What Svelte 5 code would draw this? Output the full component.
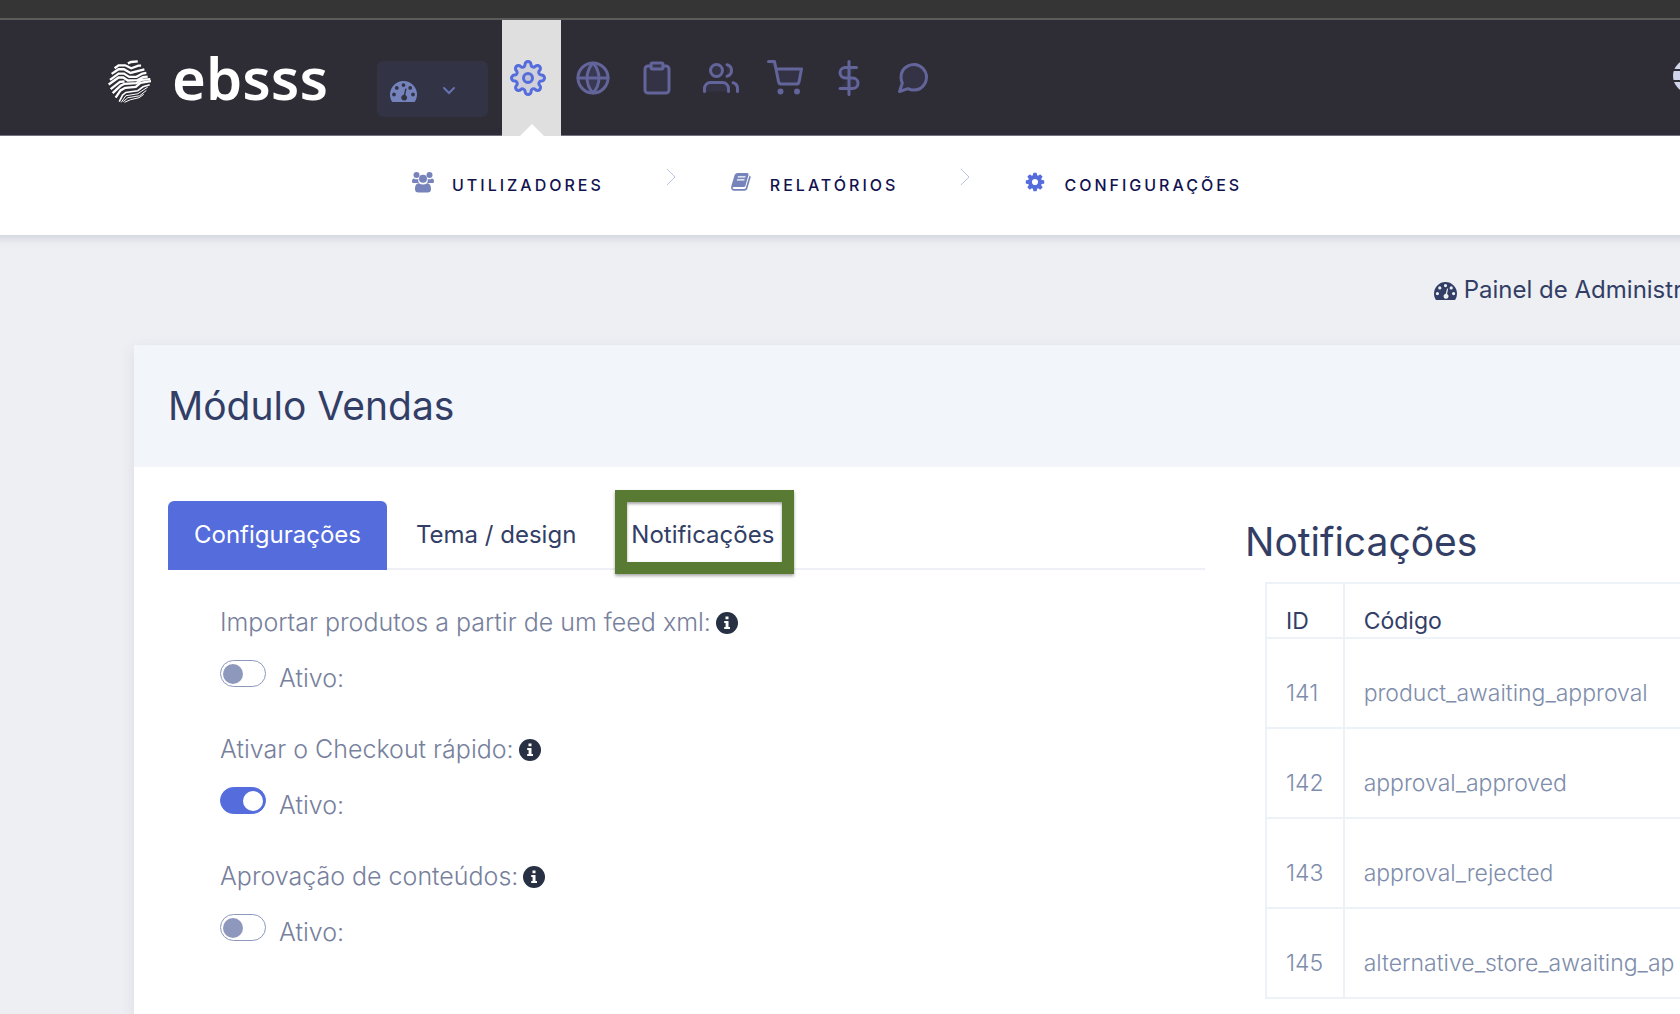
<script lang="ts">
	let activeTab = 'Configurações';
	const tabs = ['Configurações', 'Tema / design', 'Notificações'];

	let settings = [
		{ id: 'feed', label: 'Importar produtos a partir de um feed xml:', on: false },
		{ id: 'checkout', label: 'Ativar o Checkout rápido:', on: true },
		{ id: 'approval', label: 'Aprovação de conteúdos:', on: false }
	];

	const notifications = [
		{ id: 141, code: 'product_awaiting_approval' },
		{ id: 142, code: 'approval_approved' },
		{ id: 143, code: 'approval_rejected' },
		{ id: 145, code: 'alternative_store_awaiting_ap' }
	];

	// 24x24 line icons of the top bar
	const menu = [
		{
			name: 'Definições',
			active: true,
			paths: [
				'M15 12a3 3 0 1 1-6 0 3 3 0 0 1 6 0z',
				'M19.4 15a1.65 1.65 0 0 0 .33 1.82l.06.06a2 2 0 0 1 0 2.83 2 2 0 0 1-2.83 0l-.06-.06a1.65 1.65 0 0 0-1.82-.33 1.65 1.65 0 0 0-1 1.51V21a2 2 0 0 1-2 2 2 2 0 0 1-2-2v-.09A1.65 1.65 0 0 0 9 19.4a1.65 1.65 0 0 0-1.82.33l-.06.06a2 2 0 0 1-2.83 0 2 2 0 0 1 0-2.83l.06-.06a1.65 1.65 0 0 0 .33-1.82 1.65 1.65 0 0 0-1.51-1H3a2 2 0 0 1-2-2 2 2 0 0 1 2-2h.09A1.65 1.65 0 0 0 4.6 9a1.65 1.65 0 0 0-.33-1.82l-.06-.06a2 2 0 0 1 0-2.83 2 2 0 0 1 2.83 0l.06.06a1.65 1.65 0 0 0 1.82.33H9a1.65 1.65 0 0 0 1-1.51V3a2 2 0 0 1 2-2 2 2 0 0 1 2 2v.09a1.65 1.65 0 0 0 1 1.51 1.65 1.65 0 0 0 1.82-.33l.06-.06a2 2 0 0 1 2.83 0 2 2 0 0 1 0 2.83l-.06.06a1.65 1.65 0 0 0-.33 1.82V9a1.65 1.65 0 0 0 1.51 1H21a2 2 0 0 1 2 2 2 2 0 0 1-2 2h-.09a1.65 1.65 0 0 0-1.51 1z'
			]
		},
		{
			name: 'Website',
			paths: [
				'M22 12a10 10 0 1 1-20 0 10 10 0 0 1 20 0z',
				'M2 12h20',
				'M12 2a15.3 15.3 0 0 1 4 10 15.3 15.3 0 0 1-4 10 15.3 15.3 0 0 1-4-10 15.3 15.3 0 0 1 4-10z'
			]
		},
		{
			name: 'Conteúdos',
			paths: [
				'M16 4h2a2 2 0 0 1 2 2v14a2 2 0 0 1-2 2H6a2 2 0 0 1-2-2V6a2 2 0 0 1 2-2h2',
				'M9 2h6a1 1 0 0 1 1 1v2a1 1 0 0 1-1 1H9a1 1 0 0 1-1-1V3a1 1 0 0 1 1-1z'
			]
		},
		{
			name: 'Clientes',
			paths: [
				'M17 21v-2a4 4 0 0 0-4-4H5a4 4 0 0 0-4 4v2',
				'M13 7a4 4 0 1 1-8 0 4 4 0 0 1 8 0z',
				'M23 21v-2a4 4 0 0 0-3-3.87',
				'M16 3.13a4 4 0 0 1 0 7.75'
			]
		},
		{
			name: 'Vendas',
			paths: [
				'M10 21a1 1 0 1 1-2 0 1 1 0 0 1 2 0z',
				'M21 21a1 1 0 1 1-2 0 1 1 0 0 1 2 0z',
				'M1 1h4l2.68 13.39a2 2 0 0 0 2 1.61h9.72a2 2 0 0 0 2-1.61L23 6H6'
			]
		},
		{
			name: 'Pagamentos',
			paths: ['M12 1v22', 'M17 5H9.5a3.5 3.5 0 0 0 0 7h5a3.5 3.5 0 0 1 0 7H6']
		},
		{
			name: 'Mensagens',
			paths: [
				'M21 11.5a8.38 8.38 0 0 1-.9 3.8 8.5 8.5 0 0 1-7.6 4.7 8.38 8.38 0 0 1-3.8-.9L3 21l1.9-5.7a8.38 8.38 0 0 1-.9-3.8 8.5 8.5 0 0 1 4.7-7.6 8.38 8.38 0 0 1 3.8-.9h.5a8.48 8.48 0 0 1 8 8v.5z'
			]
		}
	];
</script>

{#snippet gauge()}
	<svg class="gauge" viewBox="0 0 27 21" aria-hidden="true">
		<path
			fill="currentColor"
			fill-rule="evenodd"
			d="M13.5 0A13.5 13.5 0 0 0 0 13.5c0 2.6.7 5 1.9 7 .2.3.5.5.9.5h21.4c.4 0 .7-.2.9-.5a13.5 13.5 0 0 0 1.9-7A13.5 13.5 0 0 0 13.5 0zM13.5 2.2a1.9 1.9 0 1 1 0 3.8 1.9 1.9 0 0 1 0-3.8zM6.8 5a1.9 1.9 0 1 1 0 3.8 1.9 1.9 0 0 1 0-3.8zM20.2 5a1.9 1.9 0 1 1 0 3.8 1.9 1.9 0 0 1 0-3.8zM4 11.6a1.9 1.9 0 1 1 0 3.8 1.9 1.9 0 0 1 0-3.8zM23 11.6a1.9 1.9 0 1 1 0 3.8 1.9 1.9 0 0 1 0-3.8zM15.3 7.5l1.3.3-1.3 6.2a2.9 2.9 0 1 1-1.5-.2z"
		/>
	</svg>
{/snippet}

{#snippet separator()}
	<svg class="separator" viewBox="0 0 10 18" aria-hidden="true">
		<path d="M1 1l8 8-8 8" fill="none" stroke="currentColor" />
	</svg>
{/snippet}

<div class="page">
	<div class="strip"></div>

	<header class="topbar">
		<a class="logo" href="#home">
			<svg class="logo-mark" viewBox="52 180 130 130" aria-hidden="true">
				<g fill="none" stroke="#fff" stroke-width="7">
					<path d="M112 190l10-4 20-2" />
					<path d="M72 205l12-9h20l18 9 22-8h8" />
					<path d="M63 222l21-14h16l20 11 42-11" />
					<path d="M58 240l26-19h16l16 10h22l18-10 12-2" />
					<path d="M54 254l30-21h14l14 9 28-1 18-9 14-2" />
					<path d="M60 268l28-22 14-1" />
					<path d="M66 280l24-22 12-6 36-2 14-10 28-2" />
					<path d="M75 294l15-22 14-8 32-3 14-12 32-5" />
					<path d="M86 306l10-20 10-8 36-5 16-12 20-6" stroke-width="5" />
					<path d="M92 308l14-20 36-6 30-20" stroke-width="3" />
					<path d="M98 306l14-12 36-6 20-16" stroke-width="3" />
					<path d="M102 308l18-8 26-6 14-10" stroke-width="3" />
				</g>
			</svg>
			<span>ebsss</span>
		</a>

		<button class="switcher" aria-label="Painel">
			{@render gauge()}
			<svg class="caret" viewBox="0 0 14 10" aria-hidden="true">
				<path d="M2 2l5 5 5-5" fill="none" stroke="currentColor" stroke-width="2" stroke-linecap="round" />
			</svg>
		</button>

		<nav class="menu">
			{#each menu as item}
				<a href="#menu" class:active={item.active} aria-label={item.name}>
					<svg viewBox="0 0 24 24" aria-hidden="true">
						{#each item.paths as d}
							<path {d} />
						{/each}
					</svg>
				</a>
			{/each}
		</nav>

		<a class="language" href="#language" aria-label="Idioma">
			<svg viewBox="0 0 34 34" aria-hidden="true">
				<circle cx="17" cy="17" r="17" fill="#d1d5eb" />
				<path d="M0 11h34M0 22h34" stroke="#2e2c35" stroke-width="2" />
				<ellipse cx="17" cy="17" rx="7" ry="17" fill="none" stroke="#2e2c35" stroke-width="2" />
			</svg>
		</a>
	</header>

	<nav class="subnav">
		<a href="#users">
			<svg viewBox="0 0 22 22" fill="currentColor" aria-hidden="true">
				<circle cx="4.5" cy="4" r="3" />
				<circle cx="17.5" cy="4" r="3" />
				<path d="M0 10.5C0 8.5.8 7.5 2 7.5c1.5 1 3 1 4.5.5C6 9.5 6.3 11 7 12H1.8C.6 12 0 11.5 0 10.5zM22 10.5c0-2-.8-3-2-3-1.5 1-3 1-4.5.5.5 1.5.2 3-.5 4h5.2c1.2 0 1.8-.5 1.8-1.5z" />
				<circle cx="11" cy="7.8" r="4" />
				<path d="M7 12.2c2.5 1.8 5.5 1.8 8 0 2.8 0 4 2.5 4 6 0 2-1.2 3.3-3.2 3.3H6.2C4.2 21.5 3 20.2 3 18.2c0-3.5 1.2-6 4-6z" />
			</svg>
			UTILIZADORES
		</a>
		{@render separator()}
		<a href="#reports">
			<svg viewBox="0 0 22 22" fill="currentColor" aria-hidden="true">
				<path
					fill-rule="evenodd"
					d="M7.5 2H17c1.2 0 1.8.8 1.5 2l-3 10.5c-.3 1-1 1.5-2 1.5H4c-1 0-1.5.5-1.3 1.2.2.6.8.8 1.5.8h10c.8 0 1.3-.4 1.6-1.2L19 6l.8-1.5c.8.5 1 1.2.8 2l-3.2 11c-.4 1.3-1.4 2.2-2.8 2.2H4.2C2 19.7.6 18 1.2 15.5l3.3-11C4.9 3 6 2 7.5 2zM8 5.2l-.4 1.2h7.6l.4-1.2zM7.1 8.200l-.4 1.200h7.600l.4-1.200z"
				/>
			</svg>
			RELATÓRIOS
		</a>
		{@render separator()}
		<a href="#settings" class="current">
			<svg viewBox="-150 -278 1836 1836" fill="currentColor" aria-hidden="true">
				<path
					d="M1024 640q0-106-75-181t-181-75-181 75-75 181 75 181 181 75 181-75 75-181zm512-109v222q0 12-8 23t-20 13l-185 28q-19 54-39 91 35 50 107 138 10 12 10 25t-9 23q-27 37-99 108t-94 71q-12 0-26-9l-138-108q-44 23-91 38-16 136-29 186-7 28-36 28h-222q-14 0-24.5-8.5t-11.5-21.5l-28-184q-49-16-90-37l-141 107q-10 9-25 9-14 0-25-11-126-114-165-168-7-10-7-23 0-12 8-23 15-21 51-66.5t54-70.5q-27-50-41-99l-183-27q-13-2-21-12.5t-8-23.5v-222q0-12 8-23t19-13l186-28q14-46 39-92-40-57-107-138-10-12-10-24 0-10 9-23 26-36 98.5-107.5t94.5-71.5q13 0 26 10l138 107q44-23 91-38 16-136 29-186 7-28 36-28h222q14 0 24.5 8.5t11.5 21.5l28 184q49 16 90 37l142-107q9-9 24-9 13 0 25 10 129 119 165 170 7 8 7 22 0 12-8 23-15 21-51 66.5t-54 70.5q26 50 41 98l183 28q13 2 21 12.5t8 23.5z"
				/>
			</svg>
			CONFIGURAÇÕES
		</a>
	</nav>

	<div class="breadcrumb">
		<a href="#dashboard">{@render gauge()} Painel de Administr</a>
	</div>

	<main class="card">
		<div class="card-head">
			<h1>Módulo Vendas</h1>
		</div>

		<div class="card-body">
			<section>
				<div class="tabs" role="tablist">
					{#each tabs as tab}
						<button
							role="tab"
							aria-selected={activeTab === tab}
							class:active={activeTab === tab}
							on:click={() => (activeTab = tab)}
						>
							{tab}
							{#if tab === 'Notificações'}<span class="marker"></span>{/if}
						</button>
					{/each}
				</div>

				<div class="settings">
					{#each settings as setting}
						<div class="setting">
							<p>
								{setting.label}
								<svg class="info" viewBox="0 0 22 22" aria-hidden="true">
									<circle cx="11" cy="11" r="11" fill="#283143" />
									<path fill="#fff" d="M9.5 4.5h3v2.8h-3zM8.2 9h4.3v6H14v2H8.200v-2h1.400v-4H8.200z" />
								</svg>
							</p>
							<div class="switch">
								<input id={setting.id} type="checkbox" bind:checked={setting.on} />
								<label for={setting.id}>Ativo:</label>
							</div>
						</div>
					{/each}
				</div>
			</section>

			<section class="notifications">
				<h2>Notificações</h2>
				<table>
					<thead>
						<tr>
							<th>ID</th>
							<th>Código</th>
						</tr>
					</thead>
					<tbody>
						{#each notifications as row}
							<tr>
								<td>{row.id}</td>
								<td>{row.code}</td>
							</tr>
						{/each}
					</tbody>
				</table>
			</section>
		</div>
	</main>
</div>

<style>
	:global(body) {
		margin: 0;
		background: #eeeff3;
	}

	.page {
		display: flex;
		flex-direction: column;
		min-height: 100vh;
		overflow: hidden;
		box-sizing: border-box;
		font-family: Inter, 'Open Sans', sans-serif;
		font-size: 24px;
		color: #323e66;
	}

	a {
		color: inherit;
		text-decoration: none;
	}

	button {
		font: inherit;
		color: inherit;
		border: none;
		background: none;
		cursor: pointer;
	}

	.strip {
		height: 18px;
		background: #353535;
		border-bottom: 2px solid #5c5c5b;
	}

	.topbar {
		display: flex;
		height: 115px;
		padding-left: 108px;
		background: #2e2c35;
		border-bottom: 1px solid #77767e;
	}

	.logo {
		display: flex;
		align-items: center;
		gap: 21px;
		width: 269px;
		color: #fff;
		font-family: 'Noto Sans', sans-serif;
		font-size: 58px;
		font-weight: 600;
		line-height: 110px;
	}

	.logo-mark {
		width: 43px;
		height: 43px;
		margin-top: 8px;
	}

	.switcher {
		display: flex;
		align-items: center;
		gap: 25px;
		width: 111px;
		height: 56px;
		margin: 41px 14px 0 0;
		padding: 4px 13px 0;
		border-radius: 6px;
		background: #323344;
		color: #7583bd;
	}

	.gauge {
		width: 27px;
		height: 21px;
	}

	.caret {
		width: 14px;
		height: 10px;
		color: #6573b5;
	}

	.menu {
		display: flex;
		flex: 1;
		gap: 28px;
	}

	.menu a {
		position: relative;
		height: 116px;
		padding-top: 40px;
		box-sizing: border-box;
		color: #62649a;
	}

	.menu svg {
		width: 36px;
		height: 36px;
		fill: rgba(100, 110, 190, 0.12);
		stroke: currentColor;
		stroke-width: 2;
		stroke-linecap: round;
		stroke-linejoin: round;
	}

	.menu .active {
		padding: 40px 15px 0 8px;
		margin-right: -14px;
		background: #dfdfdf;
		color: #556ddc;
	}

	.menu .active::after {
		content: '';
		position: absolute;
		bottom: 0;
		left: 18px;
		border: 12px solid transparent;
		border-top: none;
		border-bottom-color: #fff;
	}

	.language {
		margin: 39px -27px 0 0;
	}

	.language svg {
		width: 34px;
		height: 34px;
	}

	/* the bar runs past both window edges so its shadow stays even */
	.subnav {
		display: flex;
		align-items: center;
		gap: 54px;
		height: 99px;
		margin: 0 -20px;
		padding-left: 432px;
		background: #fff;
		box-shadow: 0 2px 10px rgba(60, 70, 120, 0.2);
		color: #12124f;
		font-size: 16px;
		font-weight: 500;
		letter-spacing: 3px;
	}

	.subnav a {
		display: flex;
		align-items: center;
		gap: 18px;
		margin-bottom: 2px;
	}

	.subnav a svg {
		width: 22px;
		height: 22px;
		margin-bottom: 6px;
		color: #7784bb;
	}

	.subnav .current svg {
		color: #556ddc;
	}

	.separator {
		width: 10px;
		height: 18px;
		margin: 0 0 18px 8px;
		color: #b9c3e4;
	}

	.breadcrumb {
		display: flex;
		justify-content: flex-end;
		height: 110px;
		line-height: 110px;
		white-space: nowrap;
	}

	.breadcrumb a {
		width: 246px;
	}

	.breadcrumb .gauge {
		width: 23px;
		height: 18px;
		vertical-align: -2px;
	}

	.card {
		flex: 1;
		margin: 0 -20px 0 134px;
		background: #fff;
		box-shadow: 0 4px 14px rgba(60, 70, 100, 0.1);
	}

	.card-head {
		padding: 0 34px;
		background: #f2f5fa;
	}

	h1,
	h2 {
		margin: 0;
		font-size: 39px;
		font-weight: 400;
	}

	h1 {
		line-height: 122px;
	}

	.card-body {
		display: grid;
		grid-template-columns: minmax(0, 1fr) 455px;
		gap: 40px;
		padding: 34px 0 0 34px;
	}

	.tabs {
		display: flex;
		gap: 3px;
		border-bottom: 2px solid #eeeff7;
	}

	.tabs button {
		position: relative;
		height: 69px;
		margin-bottom: -2px;
		padding: 0 26px 2px;
		border-radius: 6px 6px 0 0;
	}

	.tabs .active {
		background: #556ddc;
		color: #fff;
	}

	/* green frame over the tab */
	.marker {
		position: absolute;
		inset: -11px 6px -4px 10px;
		border: 12px solid #587a33;
		box-shadow:
			0 2px 3px rgba(0, 0, 0, 0.35),
			inset 0 2px 3px rgba(0, 0, 0, 0.35);
	}

	.settings {
		padding: 32px 0 0 52px;
		color: #77809c;
		font-size: 25px;
		font-weight: 300;
		line-height: 40px;
	}

	.setting {
		height: 127px;
	}

	.setting p {
		margin: 0;
	}

	.info {
		width: 22px;
		height: 22px;
		margin-left: -2px;
		vertical-align: -3px;
	}

	.switch {
		display: flex;
		gap: 13px;
		padding-top: 16px;
	}

	.switch input {
		display: flex;
		align-items: center;
		appearance: none;
		width: 46px;
		height: 27px;
		margin: 2px 0 0;
		padding: 0 2px;
		box-sizing: border-box;
		border: 1px solid #8e98bd;
		border-radius: 14px;
	}

	.switch input::before {
		content: '';
		width: 20px;
		height: 20px;
		border-radius: 50%;
		background: #8e98bd;
	}

	.switch input:checked {
		justify-content: flex-end;
		border-color: #556ddc;
		background: #556ddc;
	}

	.switch input:checked::before {
		background: #fff;
	}

	.notifications h2 {
		padding-top: 16px;
		line-height: 50px;
	}

	table {
		width: 460px;
		margin: 15px 0 16px 20px;
		border-collapse: collapse;
		font-size: 23px;
		line-height: 30px;
	}

	th,
	td {
		box-sizing: border-box;
		padding: 0 19px;
		border: 2px solid #edf1f8;
		text-align: left;
		vertical-align: top;
		white-space: nowrap;
	}

	th {
		height: 55px;
		padding-top: 22px;
		font-weight: 400;
	}

	th:first-child {
		width: 77px;
	}

	td {
		height: 90px;
		padding-top: 39px;
		color: #7e8dab;
		font-weight: 300;
	}
</style>
